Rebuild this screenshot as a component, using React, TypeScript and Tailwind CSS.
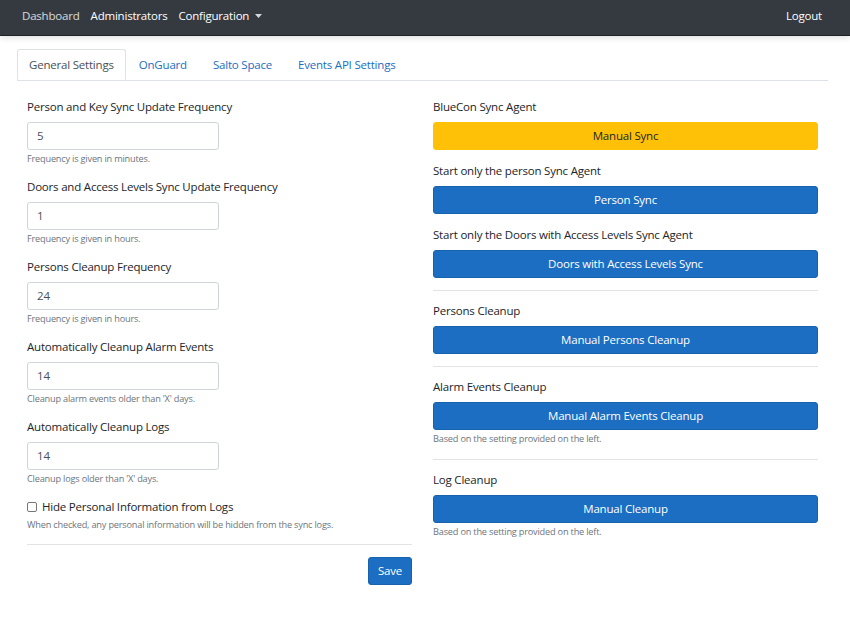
import React from 'react';

const fields = [
    { label: 'Person and Key Sync Update Frequency', value: '5', help: 'Frequency is given in minutes.' },
    { label: 'Doors and Access Levels Sync Update Frequency', value: '1', help: 'Frequency is given in hours.' },
    { label: 'Persons Cleanup Frequency', value: '24', help: 'Frequency is given in hours.' },
    { label: 'Automatically Cleanup Alarm Events', value: '14', help: "Cleanup alarm events older than 'X' days." },
    { label: 'Automatically Cleanup Logs', value: '14', help: "Cleanup logs older than 'X' days." },
];

const tabs = ['General Settings', 'OnGuard', 'Salto Space', 'Events API Settings'];

const BlueButton = ({ children }: { children: React.ReactNode }) => (
    <button className="block h-[28px] w-full rounded-[3px] border border-[#1861ac] bg-[#1b6ec2] text-[11.5px] font-medium text-white">
        {children}
    </button>
);

const Help = ({ children }: { children: React.ReactNode }) => (
    <div className="mt-[2px] text-[9.2px] leading-[14px] text-[#6c757d]">{children}</div>
);

const Label = ({ children }: { children: React.ReactNode }) => (
    <div className="mb-[6px] text-[11.5px] leading-[18px] text-[#212529]">{children}</div>
);

export default function App() {
    return (
        <div className="min-h-[625px] bg-white font-['Open_Sans',sans-serif] tracking-[-0.2px] text-[#212529]">
            {/* Navbar */}
            <nav className="flex h-[36px] items-center justify-between border-b border-[#1e2226] bg-[#343a40] px-[22px] pb-[4px] text-[11.5px] shadow-[0_2px_6px_rgba(0,0,0,0.12)]">
                <div className="flex items-center gap-[11px]">
                    <span className="text-white/80">Dashboard</span>
                    <span className="font-medium text-white">Administrators</span>
                    <span className="flex items-center font-medium text-white">
                        Configuration
                        <svg className="ml-[6px]" width="7" height="4" viewBox="0 0 7 4">
                            <path d="M0 0h7L3.5 4z" fill="#ffffff" fillOpacity="0.8" />
                        </svg>
                    </span>
                </div>
                <span className="pr-[6px] font-medium text-white">Logout</span>
            </nav>

            <div className="mx-[17px] mt-[13px] w-[811px]">
                {/* Tabs */}
                <div className="flex border-b border-[#dee2e6] text-[11.5px]">
                    {tabs.map((t, i) =>
                        i === 0 ? (
                            <div key={t} className="-mb-px flex h-[31px] items-center rounded-t-[3px] border border-[#dee2e6] border-b-white bg-white px-[11px] text-[#495057]">
                                {t}
                            </div>
                        ) : (
                            <div key={t} className="flex h-[31px] items-center border border-transparent px-[12px] text-[#1b6ec2]">
                                {t}
                            </div>
                        )
                    )}
                </div>

                <div className="grid grid-cols-2 gap-x-[21px] px-[10px] pt-[17px]">
                    {/* Left column */}
                    <div>
                        {fields.map((f) => (
                            <div key={f.label} className="mb-[12px]">
                                <Label>{f.label}</Label>
                                <div className="flex h-[28px] w-[192px] items-center rounded-[3px] border border-[#ced4da] px-[9px] text-[11.5px] text-[#495057]">
                                    {f.value}
                                </div>
                                <Help>{f.help}</Help>
                            </div>
                        ))}
                        <div className="mb-[12px]">
                            <label className="flex items-center text-[11.5px] leading-[18px]">
                                <span className="mr-[5px] h-[10px] w-[10px] rounded-[2px] border border-[#767676] bg-white"></span>
                                Hide Personal Information from Logs
                            </label>
                            <Help>When checked, any personal information will be hidden from the sync logs.</Help>
                        </div>
                        <div className="border-t border-[#e3e3e3]"></div>
                        <div className="mt-[12px] flex justify-end">
                            <button className="h-[28px] rounded-[3px] border border-[#1861ac] bg-[#1b6ec2] px-[9px] text-[11.5px] font-medium text-white">
                                Save
                            </button>
                        </div>
                    </div>

                    {/* Right column */}
                    <div>
                        <div className="mb-[12px]">
                            <Label>BlueCon Sync Agent</Label>
                            <button className="block h-[28px] w-full rounded-[3px] border border-[#ffc107] bg-[#ffc107] text-[11.5px] text-[#212529]">
                                Manual Sync
                            </button>
                        </div>
                        <div className="mb-[12px]">
                            <Label>Start only the person Sync Agent</Label>
                            <BlueButton>Person Sync</BlueButton>
                        </div>
                        <div>
                            <Label>Start only the Doors with Access Levels Sync Agent</Label>
                            <BlueButton>Doors with Access Levels Sync</BlueButton>
                        </div>
                        <div className="mb-[11px] mt-[12px] border-t border-[#e3e3e3]"></div>
                        <div>
                            <Label>Persons Cleanup</Label>
                            <BlueButton>Manual Persons Cleanup</BlueButton>
                        </div>
                        <div className="mb-[11px] mt-[12px] border-t border-[#e3e3e3]"></div>
                        <div>
                            <Label>Alarm Events Cleanup</Label>
                            <BlueButton>Manual Alarm Events Cleanup</BlueButton>
                            <Help>Based on the setting provided on the left.</Help>
                        </div>
                        <div className="mb-[11px] mt-[13px] border-t border-[#e3e3e3]"></div>
                        <div>
                            <Label>Log Cleanup</Label>
                            <BlueButton>Manual Cleanup</BlueButton>
                            <Help>Based on the setting provided on the left.</Help>
                        </div>
                    </div>
                </div>
            </div>
        </div>
    );
}
